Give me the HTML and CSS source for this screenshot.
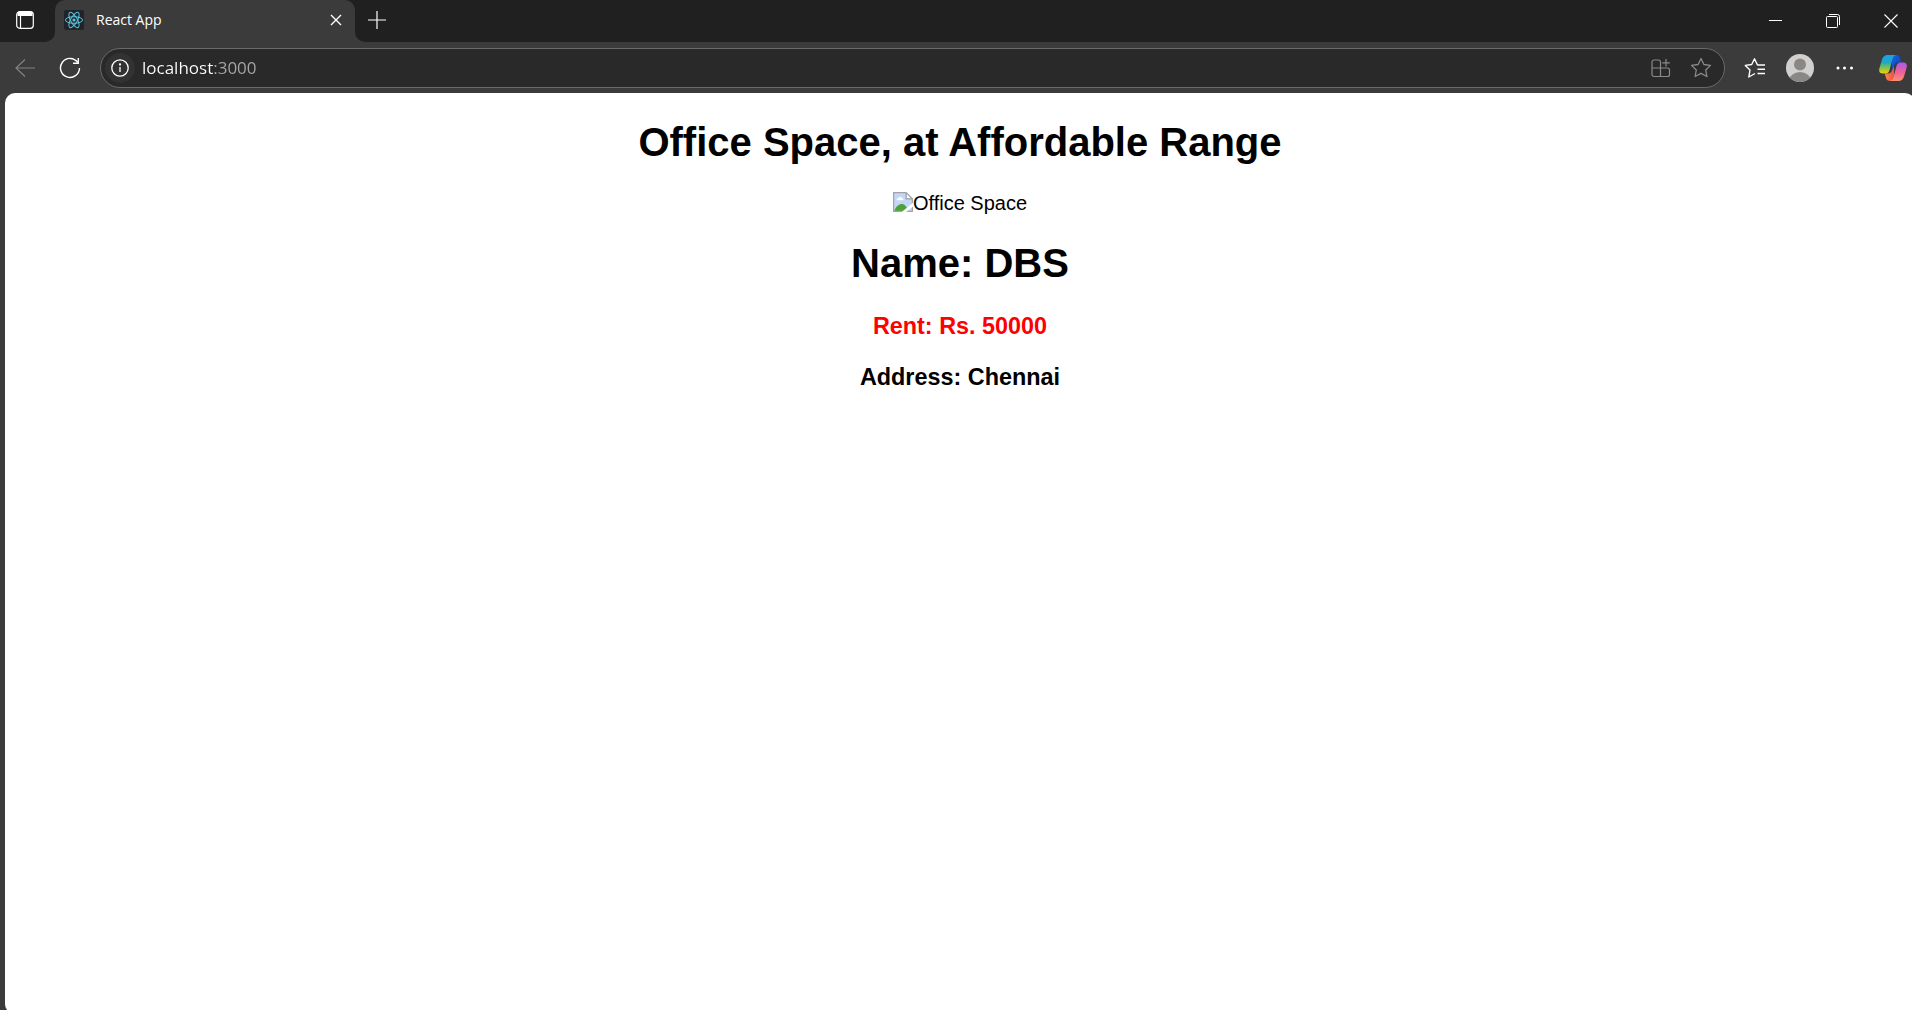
FILE: index.html
```html
<!DOCTYPE html>
<html lang="en">
<head>
<meta charset="utf-8">
<title>React App</title>
<link rel="stylesheet" href="styles.css">
</head>
<body>
<div class="browser">
  <header class="tabstrip">
    <div class="strip-left">
      <button class="icon-btn tab-actions" aria-label="Tab actions">
        <svg width="18" height="18" viewBox="0 0 18 18" fill="none" stroke="#fff" stroke-width="1.2"><rect x=".7" y=".7" width="16.6" height="16.6" rx="3"/><path d="M1.500 3h15" stroke-width="4"/><path d="M4.500 5v12"/></svg>
      </button>
    </div>
    <div class="tab-slot">
      <div class="tab">
        <svg class="favicon" width="20" height="20" viewBox="0 0 20 20" fill="none" stroke="#58c4dc" stroke-width="1"><rect width="20" height="20" rx="2" fill="#20232a" stroke="none"/><ellipse cx="10" cy="10" rx="8.6" ry="3.3"/><ellipse cx="10" cy="10" rx="8.6" ry="3.3" transform="rotate(60 10 10)"/><ellipse cx="10" cy="10" rx="8.6" ry="3.3" transform="rotate(120 10 10)"/><circle cx="10" cy="10" r="1.6" fill="#58c4dc" stroke="none"/></svg>
        <span class="tab-title">React App</span>
        <button class="icon-btn tab-close" aria-label="Close tab">
          <svg width="12" height="12" viewBox="0 0 12 12" stroke="#fff" stroke-width="1.4"><path d="M1 1l10 10M11 1L1 11"/></svg>
        </button>
      </div>
    </div>
    <div class="strip-right">
      <button class="icon-btn new-tab" aria-label="New tab">
        <svg width="18" height="18" viewBox="0 0 18 18" stroke="#fff" stroke-width="1.2"><path d="M9 0v18M0 9h18"/></svg>
      </button>
      <div class="window-controls">
        <button class="icon-btn" aria-label="Minimize"><svg width="14" height="14" viewBox="0 0 14 14" stroke="#fff"><path d="M1 6.500h13"/></svg></button>
        <button class="icon-btn" aria-label="Restore"><svg width="14" height="14" viewBox="0 0 14 14" fill="none" stroke="#fff"><rect x=".5" y="2.500" width="11" height="11" rx="1"/><path d="M3 .5h8.500a2 2 0 0 1 2 2V11"/></svg></button>
        <button class="icon-btn" aria-label="Close"><svg width="14" height="14" viewBox="0 0 14 14" stroke="#fff" stroke-width="1.100"><path d="M.5.5l13 13M13.500.5l-13 13"/></svg></button>
      </div>
    </div>
  </header>

  <nav class="toolbar">
    <button class="icon-btn back" aria-label="Back" disabled>
      <svg width="20" height="20" viewBox="0 0 20 20" fill="none" stroke="#828282" stroke-width="1.2"><path d="M20 10H1M10 1.500L1 10l9 8.500"/></svg>
    </button>
    <button class="icon-btn reload" aria-label="Refresh">
      <svg width="22" height="22" viewBox="0 0 22 22" fill="none" stroke="#fff" stroke-width="1.4"><path d="M18.800 5.500A9.500 9.500 0 1 0 20.500 11"/><path d="M19.300 1v5.200H14"/></svg>
    </button>
    <form class="address">
      <button type="button" class="icon-btn site-info" aria-label="View site information">
        <svg width="18" height="18" viewBox="0 0 18 18" fill="none" stroke="#fff" stroke-width="1.3"><circle cx="9" cy="9" r="8.200"/><path d="M9 8v5"/><circle cx="9" cy="5.500" r=".5"/></svg>
      </button>
      <input class="url" type="text" aria-label="Address" value="localhost:3000">
      <button type="button" class="icon-btn" aria-label="Install app">
        <svg width="20" height="20" viewBox="0 0 20 20" fill="none" stroke="#8a8a8a" stroke-width="1.2"><path d="M9.500 18.500H3a2 2 0 0 1-2-2V4a2 2 0 0 1 2-2h4.500a2 2 0 0 1 2 2zM1 10h15.500a2 2 0 0 1 2 2v4.500a2 2 0 0 1-2 2h-7M15 1v7.500M11.200 4.800h7.600"/></svg>
      </button>
      <button type="button" class="icon-btn" aria-label="Add to favorites">
        <svg width="22" height="22" viewBox="0 0 22 22" fill="none" stroke="#8a8a8a" stroke-width="1.300" stroke-linejoin="round"><path d="M11 1.500l2.900 6 6.600.9-4.800 4.600 1.200 6.500-5.900-3.100-5.900 3.100 1.200-6.500L1.500 8.400l6.600-.9z"/></svg>
      </button>
    </form>
    <div class="tools">
      <button class="icon-btn" aria-label="Favorites">
        <svg width="22" height="22" viewBox="0 0 22 22" fill="none" stroke="#fff" stroke-width="1.400" stroke-linejoin="round"><path d="M21 8h-7.500L10.500 1.800 7.700 7.500 1.300 8.400 6 13l-1.200 7L11 16.500M13.500 12.300H21M13.500 16.500H21"/></svg>
      </button>
      <button class="icon-btn" aria-label="Profile">
        <svg width="28" height="28" viewBox="0 0 28 28"><defs><clipPath id="disc"><circle cx="14" cy="14" r="14"/></clipPath></defs><g clip-path="url(#disc)"><path fill="#d2d0ce" d="M0 0h28v28H0z"/><circle cx="14" cy="10.500" r="6" fill="#8a8886"/><ellipse cx="14" cy="27" rx="11" ry="9" fill="#8a8886"/></g></svg>
      </button>
      <button class="icon-btn" aria-label="Settings and more">
        <svg width="20" height="18" viewBox="0 0 20 18" fill="#fff"><circle cx="4" cy="9" r="1.500"/><circle cx="10.500" cy="9" r="1.500"/><circle cx="17.500" cy="9" r="1.500"/></svg>
      </button>
      <button class="icon-btn copilot" aria-label="Copilot">
        <svg width="28" height="26" viewBox="0 0 28 26">
          <defs>
            <linearGradient id="cool" x1="0" y1="0" x2="0" y2="1"><stop offset="0" stop-color="#18a0f0"/><stop offset=".4" stop-color="#22a6c0"/><stop offset=".7" stop-color="#84c444"/><stop offset="1" stop-color="#f4cc10"/></linearGradient>
            <linearGradient id="warm" x1="0" y1="0" x2="0" y2="1"><stop offset="0" stop-color="#a55af0"/><stop offset=".5" stop-color="#ee6098"/><stop offset="1" stop-color="#fb9070"/></linearGradient>
            <linearGradient id="blue" x1="0" y1="0" x2="1" y2="1"><stop offset="0" stop-color="#1068dc"/><stop offset="1" stop-color="#1838b4"/></linearGradient>
            <linearGradient id="orange" x1="0" y1="0" x2="1" y2="0"><stop offset="0" stop-color="#fb8a40"/><stop offset="1" stop-color="#ee4e48"/></linearGradient>
          </defs>
          <path fill="url(#blue)" d="M13 0h4q3 0 4 3l1.500 4.500H19q-3 0-4 3L13 15z"/>
          <path fill="url(#orange)" d="M15 26h-4q-3 0-4-3l-1.200-4.500H9q3 0 4-3L15 11z"/>
          <path fill="url(#cool)" d="M8.500 0H17q-2.500.5-3.500 4l-3 11q-1 3.500-4 3.500H4Q-1 18.500.5 13L3 4.500Q4.500 0 8.500 0z"/>
          <path fill="url(#warm)" d="M19.500 26H11q2.500-.5 3.500-4l3-11q1-3.500 4-3.500H24q5 0 3.500 5.500L25 21.500q-1.500 4.500-5.500 4.500z"/>
        </svg>
      </button>
    </div>
  </nav>

  <main class="page">
    <h1>Office Space, at Affordable Range</h1>
    <div class="photo" role="img" aria-label="Office Space">
      <svg width="20" height="20" viewBox="0 0 16 16"><path fill="#c3d7f7" d="M.5.5h10L15.500 5v10.500H.5z"/><path fill="#fff" d="M3 6.500c-.2-1.200.8-1.500 1.300-1.400C4.800 3.500 7 3.700 7.200 5c1 0 1.300.8 1 1.500z"/><path fill="#4ca336" d="M1 15.500c1-4.500 4-6 6-6 2 0 4.500 2 5 6z"/><path fill="#fff" d="M11 1l4 4h-4z"/><path fill="none" stroke="#a3a3a3" d="M.5 16V.5h10l5 5v10H.5M10.500.5v5h5"/><path fill="#fff" d="M16 8.500L7 16h3.500L16 11.500z"/></svg><span>Office Space</span>
    </div>
    <h1>Name: DBS</h1>
    <h3 class="rent">Rent: Rs. 50000</h3>
    <h3>Address: Chennai</h3>
  </main>
</div>
</body>
</html>
```
FILE: styles.css
```css
* { box-sizing: border-box; }

body {
  margin: 0;
  background: #3b3b3b;
  font-family: "Open Sans", "Noto Sans", sans-serif;
  overflow: hidden;
}

.browser {
  display: flex;
  flex-direction: column;
  min-height: 100vh;
}

.icon-btn {
  display: flex;
  align-items: center;
  justify-content: center;
  flex: none;
  padding: 0;
  border: 0;
  background: none;
}

svg { display: block; flex: none; }

/* Tab strip */
.tabstrip { display: flex; height: 42px; }

.strip-left {
  display: flex;
  width: 55px;
  padding-left: 16px;
  background: #202020;
  border-bottom-right-radius: 10px;
}

.tab-actions, .new-tab { height: 40px; }

.tab-slot { width: 300px; background: linear-gradient(#202020 50%, #3b3b3b 50%); }

.tab {
  display: flex;
  align-items: center;
  height: 40px;
  padding: 0 13px 0 9px;
  background: #3b3b3b;
  border-radius: 10px 10px 0 0;
}

.tab-title {
  flex: 1;
  margin-left: 12px;
  padding-bottom: 2px;
  color: #fff;
  font-size: 14px;
}

.strip-right {
  display: flex;
  flex: 1;
  justify-content: space-between;
  padding-left: 13px;
  background: #202020;
  border-bottom-left-radius: 10px;
}

.window-controls { display: flex; }
.window-controls .icon-btn { width: 58px; }
.window-controls .icon-btn:last-child { width: 42px; margin-left: 8px; }

/* Toolbar */
.toolbar {
  display: flex;
  align-items: center;
  height: 51px;
  padding: 0 5px 0 15px;
}

.reload { margin: 0 19px 0 24px; }

.address {
  display: flex;
  flex: 1;
  align-items: center;
  gap: 19px;
  height: 40px;
  margin: 0;
  padding: 0 12px 0 4px;
  background: #292929;
  border: 1px solid #6a6a6a;
  border-radius: 20px;
}

.site-info {
  width: 30px;
  height: 30px;
  background: #323232;
  border-radius: 50%;
}

/* The host is bright, the port after it is dimmed. */
.url {
  flex: 1;
  min-width: 0;
  margin-left: -12px;
  padding: 0;
  border: 0;
  outline: 0;
  background: linear-gradient(to right, #fff 72px, #a8a8a8 72px);
  background-clip: text;
  color: transparent;
  font: 17px "Open Sans", "Noto Sans", sans-serif;
}

.tools {
  display: flex;
  align-items: center;
  gap: 20px;
  margin-left: 19px;
}

.copilot { margin-left: 5px; }

/* Page content; its right and bottom edges run just past the window. */
.page {
  display: flow-root;
  flex: 1;
  margin: 0 -3px -4px 5px;
  padding: 0 10px;
  background: #fff;
  border-radius: 10px;
  color: #000;
  font-family: Arial, "Liberation Sans", sans-serif;
  font-size: 20px;
  text-align: center;
}

.page h1 { font-size: 2em; }

.page .rent { color: #f00; }

.photo {
  display: flex;
  justify-content: center;
  height: 23px;
  line-height: 22px;
}
```
